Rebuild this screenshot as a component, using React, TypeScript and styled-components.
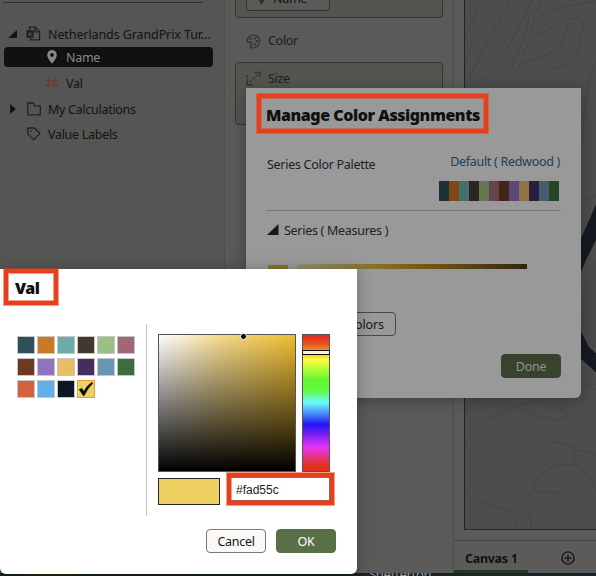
import React from "react";
import styled, { createGlobalStyle } from "styled-components";

const Global = createGlobalStyle`
  * { box-sizing: border-box; }
  body { margin: 0; overflow: hidden; }
`;

const Page = styled.div`
  position: relative;
  width: 596px;
  height: 576px;
  overflow: hidden;
  background: #5a5a59;
  color: #161513;
  font: 12.5px/16px "Noto Sans", sans-serif;
`;

const Label = styled.span<{ $track?: number }>`
  white-space: nowrap;
  letter-spacing: ${(p) => p.$track ?? -0.29}px;
`;

const RowLabel = styled(Label)`
  padding-top: 2px;
`;

const Workbench = styled.div`
  display: grid;
  grid-template-columns: 225px 229px 1fr;
  height: 573px;
`;

const Sidebar = styled.aside`
  border-right: 1px solid #4d4d4c;
  background: #555553;
`;

const SearchLine = styled.div`
  width: 200px;
  height: 3px;
  margin-left: 3px;
  border-bottom: 1px solid #323230;
`;

const Tree = styled.ul`
  list-style: none;
  margin: 18px 0 0;
  padding: 0;
`;

const TreeRow = styled.li<{ $height: number; $indent?: number; $selected?: boolean }>`
  display: flex;
  align-items: center;
  width: 209px;
  height: ${(p) => p.$height}px;
  margin-left: 4px;
  padding-left: ${(p) => p.$indent ?? 0}px;
  border-radius: 4px;
  background: ${(p) => (p.$selected ? "#11110f" : "transparent")};
  color: ${(p) => (p.$selected ? "#8a8a88" : "#131311")};
`;

const Toggle = styled.svg`
  width: 10px;
  height: 12px;
  margin: 0 8px 0 4px;
  fill: #131311;
  flex: none;
`;

const TreeIcon = styled.svg`
  width: 16px;
  height: 16px;
  margin-right: 6px;
  flex: none;
  fill: none;
  stroke: #222220;
  stroke-width: 1.3;
`;

const Grammar = styled.section`
  padding: 0 10px;
  border-right: 1px solid #4e4e4d;
  background: #5a5a58;
`;

const DropZone = styled.div<{ $height: number; $cut?: boolean }>`
  height: ${(p) => p.$height}px;
  width: 208px;
  border: 1px solid #343432;
  border-top-width: ${(p) => (p.$cut ? 0 : 1)}px;
  border-radius: ${(p) => (p.$cut ? "0 0 4px 4px" : "4px")};
  background: #545451;
  padding-left: 10px;
`;

const Chip = styled.div`
  display: flex;
  align-items: flex-end;
  width: 84px;
  height: 11px;
  padding: 0 0 3px 10px;
  border: 1px solid #343432;
  border-top: 0;
  border-radius: 0 0 3px 3px;
  background: #5a5a58;
  overflow: hidden;
`;

const ChipPin = styled.svg`
  width: 9px;
  height: 13px;
  margin: 0 7px 2px 0;
  fill: #26391f;
  flex: none;
`;

const GrammarHead = styled.div<{ $height: number }>`
  display: flex;
  align-items: center;
  gap: 7px;
  height: ${(p) => p.$height}px;
  color: #20201f;
`;

const ColorHead = styled(GrammarHead)`
  padding: 2px 0 0 11px;
`;

const SmallIcon = styled.svg`
  width: 15px;
  height: 15px;
  fill: none;
  stroke: #353534;
  stroke-width: 1.4;
  flex: none;
`;

const CanvasArea = styled.main`
  display: flex;
  flex-direction: column;
  background: #5b5b5a;
`;

const MapFrame = styled.div`
  height: 530px;
  margin-left: 10px;
  border-left: 1px solid #1c2914;
  border-bottom: 1px solid #272c1f;
  background: #4d4d4d;
`;

const MapArt = styled.svg`
  display: block;
  width: 131px;
  height: 529px;
  fill: none;
  stroke: #454544;
  stroke-width: 1;
`;

const Tabs = styled.nav`
  display: flex;
  align-items: center;
  height: 33px;
  margin-top: 10px;
  border-top: 1px solid #484847;
`;

const Tab = styled.div`
  width: 74px;
  height: 32px;
  padding: 10px 0 0 11px;
  border-bottom: 3px solid #26391f;
  color: #111;
  font-weight: 700;
`;

const AddTab = styled.svg`
  width: 14px;
  height: 14px;
  margin: 2px 0 0 33px;
  fill: none;
  stroke: #191918;
  stroke-width: 1.4;
`;

const BottomStrip = styled.div`
  display: flex;
  height: 3px;
  padding-left: 369px;
  overflow: hidden;
  background: linear-gradient(90deg, #13242b 25px, #1d2b0c 25px, #1d2b0c 78px, #13242b 79px, #152630);
  color: #999;
  font-size: 13px;
  line-height: 3px;
`;

const ManageDialog = styled.section`
  position: absolute;
  left: 246px;
  top: 88px;
  width: 335px;
  height: 310px;
  padding: 17px 20px 0;
  border-radius: 0 0 6px 6px;
  background: #999;
  box-shadow: 0 2px 16px rgba(0, 0, 0, 0.3);
`;

const Title = styled.h1`
  margin: 0;
  font: 900 16px/20px "Noto Sans", sans-serif;
  color: #101010;
  white-space: nowrap;
  letter-spacing: -0.45px;
`;

const PaletteRow = styled.div`
  display: flex;
  justify-content: space-between;
  height: 86px;
  width: 295px;
  padding: 32px 1px 0 1px;
  border-bottom: 1px solid #747b80;
  color: #20201f;
`;

const PaletteChoice = styled.div`
  display: flex;
  flex-direction: column;
  align-items: flex-end;
  margin-top: -3px;
  color: #1f4058;
`;

const Strip = styled.div`
  display: flex;
  margin: 11px 1px 0 0;
`;

const StripCell = styled.span<{ $color: string }>`
  width: 10px;
  height: 20px;
  background: ${(p) => p.$color};
`;

const SeriesHead = styled.div`
  display: flex;
  align-items: center;
  gap: 5px;
  height: 38px;
  padding-left: 1px;
  color: #20201f;
`;

const SeriesToggle = styled.svg`
  width: 12px;
  height: 12px;
  fill: #181817;
`;

const RampRow = styled.div`
  display: flex;
  align-items: flex-end;
  height: 20px;
  margin-left: 2px;
`;

const RampChip = styled.div`
  width: 20px;
  height: 4px;
  margin-right: 9px;
  background: #887329;
`;

const Ramp = styled.div`
  width: 230px;
  height: 5px;
  background: linear-gradient(90deg, #929071, #8c7d43 22%, #80691e 42%, #725713 58%, #503c15 80%, #30260e);
`;

const DialogButton = styled.button<{ $kind: "cut" | "dim" | "plain" | "primary" }>`
  flex: none;
  height: 24px;
  width: ${(p) => (p.$kind === "cut" ? 130 : 60)}px;
  padding: ${(p) => (p.$kind === "cut" ? "2px 11px 0 0" : "2px 0 0")};
  text-align: ${(p) => (p.$kind === "cut" ? "right" : "center")};
  border-radius: 4px;
  border: 1px solid ${(p) => ({ cut: "#484845", dim: "#37432c", plain: "#7c7871", primary: "#586f48" })[p.$kind]};
  background: ${(p) => ({ cut: "#999", dim: "#37432c", plain: "#fbf9f8", primary: "#586f48" })[p.$kind]};
  color: ${(p) => ({ cut: "#161614", dim: "#8f948a", plain: "#161513", primary: "#fff" })[p.$kind]};
  font: 12.5px/20px "Noto Sans", sans-serif;
`;

const ResetRow = styled.div`
  display: flex;
  margin-top: 43px;
`;

const DoneRow = styled.div`
  display: flex;
  justify-content: flex-end;
  margin-top: 18px;
`;

const ColorPopup = styled.section`
  position: absolute;
  left: 0;
  top: 269px;
  width: 357px;
  height: 305px;
  padding-top: 9px;
  border-radius: 0 0 6px 6px;
  background: #fff;
  box-shadow: 0 2px 16px rgba(0, 0, 0, 0.3);
`;

const PopupTitle = styled(Title)`
  margin-left: 15px;
`;

const PickerBody = styled.div`
  display: flex;
  margin-top: 26px;
`;

const Swatches = styled.div`
  display: grid;
  grid-template-columns: repeat(6, 18px);
  grid-auto-rows: 18px;
  gap: 4px 2px;
  width: 147px;
  height: 192px;
  padding: 12px 0 0 17px;
  border-right: 1px solid #c4c4c4;
`;

const Swatch = styled.span<{ $color: string; $active?: boolean }>`
  border: 1px solid ${(p) => (p.$active ? "#eb9d2f" : "#c6c6c6")};
  background: ${(p) => p.$color};
`;

const Check = styled.svg`
  display: block;
  width: 16px;
  height: 16px;
  fill: #050505;
  stroke: #050505;
  stroke-width: 0.4;
`;

const Picker = styled.div`
  display: grid;
  grid-template-columns: 138px 28px;
  column-gap: 6px;
  padding: 10px 0 0 11px;
  align-content: start;
`;

const Spectrum = styled.div`
  position: relative;
  height: 138px;
  border: 1px solid #555;
  background: linear-gradient(to bottom, transparent, #000), linear-gradient(to right, #fff, #f6dc93 43%, #efbd31);
`;

const Knob = styled.span`
  position: absolute;
  left: 81px;
  top: -2px;
  width: 7px;
  height: 7px;
  border-radius: 50%;
  border: 1px solid #fff;
  background: #000;
`;

const Hue = styled.div`
  position: relative;
  height: 138px;
  border: 1px solid #555;
  background: linear-gradient(#e0301e 0 2%, #e8621f 8%, #f3ad32 13%, #fdfd3f 18%, #64f832 33%, #61f83b 40%, #69fbfd 50%, #2512f5 66%, #ea35f0 83%, #e1301e 96%);
`;

const HueMark = styled.span`
  position: absolute;
  left: -1px;
  top: 15px;
  width: 28px;
  height: 5px;
  border: 1px solid #111;
  background: #fcefd0;
`;

const Preview = styled.div`
  width: 62px;
  height: 27px;
  margin-top: 6px;
  border: 1px solid #252525;
  background: #eed160;
`;

const HexRow = styled.div`
  grid-column: 1 / 3;
  display: flex;
`;

const HexInput = styled.input`
  width: 100px;
  height: 24px;
  margin: 5px 0 0 10px;
  padding: 1px 0 0 5px;
  border: 1px solid #777;
  outline: none;
  color: #222;
  font: 12px/20px "Liberation Sans", sans-serif;
`;

const Footer = styled.div`
  display: flex;
  justify-content: flex-end;
  gap: 10px;
  margin: 13px 21px 0 0;
`;

const Callout = styled.div<{ $x: number; $y: number; $w: number; $h: number }>`
  position: absolute;
  left: ${(p) => p.$x}px;
  top: ${(p) => p.$y}px;
  width: ${(p) => p.$w}px;
  height: ${(p) => p.$h}px;
  border: 4px solid #e63f1b;
  box-shadow: 0 0 0 1px rgba(230, 63, 27, 0.5), inset 0 0 0 1px rgba(230, 63, 27, 0.5);
  pointer-events: none;
`;

const stripColors = ["#1d3034", "#804913", "#456e6d", "#2a251e", "#62794f", "#66434c", "#452413", "#5b487a", "#90733f", "#2e1c3f", "#415f70", "#264525"];
const swatchColors = ["#2f5058", "#c87a27", "#6dabaa", "#41382f", "#9ebf83", "#9f6877", "#6c3a21", "#9073bd", "#ebbc68", "#482c5e", "#6895af", "#3d6d3e", "#d3613f", "#63b0e9", "#0b1627"];

export default function App() {
  return (
    <Page>
      <Global />
      <Workbench>
        <Sidebar>
          <SearchLine />
          <Tree>
            <TreeRow $height={26}>
              <Toggle viewBox="0 0 10 12"><path d="M9 2V10H0Z" /></Toggle>
              <TreeIcon viewBox="0 0 16 16">
                <path d="M3.5 4V1.2H9L13.5 5.5V13.8H4.5V11.5M8.8 1.5V5.8H13" />
                <path d="M1 5H7V11H1Z" fill="#222220" />
                <path d="M2.5 6.4L5.5 9.7M5.5 6.4L2.5 9.7" stroke="#555553" strokeWidth="1" />
              </TreeIcon>
              <RowLabel $track={-0.1}>Netherlands GrandPrix Tur...</RowLabel>
            </TreeRow>
            <TreeRow $height={20} $indent={40} $selected>
              <TreeIcon viewBox="0 0 16 16">
                <path fill="#8a8a88" stroke="none" fillRule="evenodd" d="M8 1A4.8 4.8 0 0 0 3.2 5.8C3.2 9.3 8 14.8 8 14.8S12.8 9.3 12.8 5.8A4.8 4.8 0 0 0 8 1ZM8 4a1.9 1.9 0 1 1 0 3.8A1.9 1.9 0 0 1 8 4Z" />
              </TreeIcon>
              <RowLabel>Name</RowLabel>
            </TreeRow>
            <TreeRow $height={32} $indent={40}>
              <TreeIcon viewBox="0 0 16 16">
                <path stroke="#6f382f" d="M6 2L4.5 14M11.3 2L9.8 14M2.2 5.7H14M2 10.2H13.6" />
              </TreeIcon>
              <RowLabel>Val</RowLabel>
            </TreeRow>
            <TreeRow $height={20}>
              <Toggle viewBox="0 0 10 12"><path d="M2 1L8 6L2 11Z" /></Toggle>
              <TreeIcon viewBox="0 0 16 16"><path d="M1.8 2H7.3L8.5 4.8H14.3V13.8H1.8Z" /></TreeIcon>
              <RowLabel>My Calculations</RowLabel>
            </TreeRow>
            <TreeRow $height={30} $indent={22}>
              <TreeIcon viewBox="0 0 16 16">
                <path d="M1.8 2H8.3L13.9 7.6L7.7 13.6L1.8 8Z" />
                <circle cx="4.8" cy="4.9" r=".8" fill="#222220" stroke="none" />
              </TreeIcon>
              <RowLabel>Value Labels</RowLabel>
            </TreeRow>
          </Tree>
        </Sidebar>
        <Grammar>
          <DropZone $height={18} $cut>
            <Chip>
              <ChipPin viewBox="0 0 9 13"><path d="M4.5 13L0 6V0H9V6Z" /></ChipPin>
              <Label>Name</Label>
            </Chip>
          </DropZone>
          <ColorHead $height={44}>
            <SmallIcon viewBox="0 0 15 15">
              <path d="M5 13.5C6 14 9 14 11 12.6C15 9.5 14.4 4 10.5 1.8C6.5 0 1.5 2 1.2 6.5C1 8 2 9 3.6 8.3C6 7.5 6.5 9 5 11C4 12.5 4.5 13.2 5 13.5Z" />
              <g fill="#353534" stroke="none"><circle cx="5" cy="5" r="1.2" /><circle cx="9" cy="4.2" r="1.2" /><circle cx="11" cy="7.3" r="1.2" /><circle cx="9" cy="10.5" r="1.2" /></g>
            </SmallIcon>
            <Label>Color</Label>
          </ColorHead>
          <DropZone $height={63}>
            <GrammarHead $height={31}>
              <SmallIcon viewBox="0 0 15 15">
                <path d="M8 1.5H14V7M1.3 8V14H7M1.3 7V4.2M2 8M11.5 3.5L9.7 5.3M8.5 6.5L6.7 8.3M5.3 9.7L3.8 11.2" />
              </SmallIcon>
              <Label>Size</Label>
            </GrammarHead>
          </DropZone>
        </Grammar>
        <CanvasArea>
          <MapFrame>
            <MapArt viewBox="465 0 131 529">
              <path d="M482 0L465 35M511 0Q493 30 468 80M532 0Q518 37 481 85M465 66L474 37M541 0Q540 10 529 17Q527 35 517 55Q510 67 513 70Q518 73 522 61Q530 40 534 19L550 10Q570 5 596 1M531 36Q540 36 547 30Q560 20 577 18Q586 20 582 32Q580 42 577 55Q574 64 566 65L553 68Q542 74 531 88M568 22Q566 41 557 50Q540 58 522 64M596 61Q583 90 583 140M581 203L596 196M581 380Q589 388 596 390" />
              <path d="M465 443Q490 412 515 407Q535 398 555 405Q575 418 560 420Q539 420 515 407M465 413Q475 400 487 391M465 407L480 394M465 494Q483 505 509 511Q515 519 516 529M509 511Q515 502 533 491Q539 468 557 466Q574 460 586 473Q595 485 596 492M533 491Q550 490 559 493Q557 496 540 492M521 502Q535 521 530 529M572 466L577 450Q570 443 555 442Q546 445 550 439Q556 437 557 442M577 450Q590 452 596 455" />
              <path d="M596 260Q581 270 581 331Q586 346 596 351Z" fill="#4a4a49" stroke="none" />
              <path d="M598 200L579 243V277L586 260L598 236ZM579 327L589 347L598 355V374L579 357Z" fill="#151a21" stroke="none" />
            </MapArt>
          </MapFrame>
          <Tabs>
            <Tab><Label>Canvas 1</Label></Tab>
            <AddTab viewBox="0 0 14 14"><circle cx="7" cy="7" r="6.1" /><path d="M7 3.5V10.5M3.5 7H10.5" /></AddTab>
          </Tabs>
        </CanvasArea>
      </Workbench>
      <BottomStrip><Label>Snetterton</Label></BottomStrip>

      <ManageDialog>
        <Title>Manage Color Assignments</Title>
        <PaletteRow>
          <Label>Series Color Palette</Label>
          <PaletteChoice>
            <Label>Default ( Redwood )</Label>
            <Strip>{stripColors.map((c) => <StripCell key={c} $color={c} />)}</Strip>
          </PaletteChoice>
        </PaletteRow>
        <SeriesHead>
          <SeriesToggle viewBox="0 0 12 12"><path d="M11.5 0V11H0Z" /></SeriesToggle>
          <RowLabel>Series ( Measures )</RowLabel>
        </SeriesHead>
        <RampRow><RampChip /><Ramp /></RampRow>
        <ResetRow><DialogButton $kind="cut"><Label $track={-0.1}>Reset Colors</Label></DialogButton></ResetRow>
        <DoneRow><DialogButton $kind="dim"><Label>Done</Label></DialogButton></DoneRow>
      </ManageDialog>

      <ColorPopup>
        <PopupTitle>Val</PopupTitle>
        <PickerBody>
          <Swatches>
            {swatchColors.map((c) => <Swatch key={c} $color={c} />)}
            <Swatch $color="#eed160" $active>
              <Check viewBox="0 0 16 16"><path d="M1 8.6L3.8 7.2L5.9 10.4Q9 4.2 14 1.3L14.8 2.5Q9.8 7 6.3 14.6H5.2Q3 11 1 8.6Z" /></Check>
            </Swatch>
          </Swatches>
          <Picker>
            <Spectrum><Knob /></Spectrum>
            <Hue><HueMark /></Hue>
            <HexRow>
              <Preview />
              <HexInput defaultValue="#fad55c" />
            </HexRow>
          </Picker>
        </PickerBody>
        <Footer>
          <DialogButton $kind="plain"><Label>Cancel</Label></DialogButton>
          <DialogButton $kind="primary"><Label>OK</Label></DialogButton>
        </Footer>
      </ColorPopup>

      <Callout $x={257} $y={94} $w={231} $h={39} />
      <Callout $x={4} $y={269} $w={54} $h={36} />
      <Callout $x={227} $y={473} $w={107} $h={32} />
    </Page>
  );
}
